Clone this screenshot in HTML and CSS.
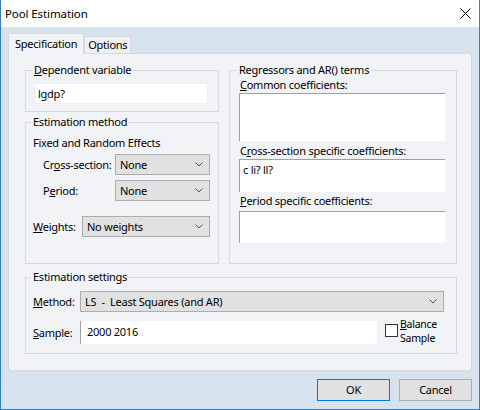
FILE: index.html
```html
<!DOCTYPE html>
<html>
<head>
<meta charset="utf-8">
<link rel="stylesheet" href="styles.css">
</head>
<body>
<div class="window">
  <div class="titlebar">
    <span class="title">Pool Estimation</span>
    <svg class="close" width="11" height="11" viewBox="0 0 11 11"><path d="M0.5 0.5L10.5 10.5M10.5 0.5L0.5 10.5" stroke="#000" stroke-width="1" fill="none"/></svg>
  </div>
  <div class="client">
    <div class="tabs">
      <div class="tab active">Specification</div>
      <div class="tab">Options</div>
    </div>
    <div class="panel">
      <div class="cols">
        <div class="col-left">
          <fieldset class="group dep">
            <legend><u>D</u>ependent variable</legend>
            <div class="edit dep-edit">lgdp?</div>
          </fieldset>
          <fieldset class="group method">
            <legend>Estimation method</legend>
            <div class="line">Fixed and Random Effects</div>
            <div class="fe-row first">
              <span class="lbl">Cr<u>o</u>ss-section:</span>
              <div class="select"><span>None</span><svg class="chev" width="8" height="5" viewBox="0 0 8 5"><path d="M0.5 0.5L4 4L7.5 0.5" stroke="#555" fill="none"/></svg></div>
            </div>
            <div class="fe-row second">
              <span class="lbl">P<u>e</u>riod:</span>
              <div class="select"><span>None</span><svg class="chev" width="8" height="5" viewBox="0 0 8 5"><path d="M0.5 0.5L4 4L7.5 0.5" stroke="#555" fill="none"/></svg></div>
            </div>
            <div class="w-row">
              <span class="lbl"><u>W</u>eights:</span>
              <div class="select"><span>No weights</span><svg class="chev" width="8" height="5" viewBox="0 0 8 5"><path d="M0.5 0.5L4 4L7.5 0.5" stroke="#555" fill="none"/></svg></div>
            </div>
          </fieldset>
        </div>
        <fieldset class="group regs">
          <legend>Regressors and AR() terms</legend>
          <div class="rlabel l1"><u>C</u>ommon coefficients:</div>
          <div class="area a1"></div>
          <div class="rlabel l2">C<u>r</u>oss-section specific coefficients:</div>
          <div class="area a2">c li? ll?</div>
          <div class="rlabel l3"><u>P</u>eriod specific coefficients:</div>
          <div class="area a3"></div>
        </fieldset>
      </div>
      <fieldset class="group settings">
        <legend>Estimation settings</legend>
        <div class="s-row">
          <span class="slbl"><u>M</u>ethod:</span>
          <div class="select wide"><span>LS&nbsp; -&nbsp; Least Squares (and AR)</span><svg class="chev" width="8" height="5" viewBox="0 0 8 5"><path d="M0.5 0.5L4 4L7.5 0.5" stroke="#555" fill="none"/></svg></div>
        </div>
        <div class="s-row sample">
          <span class="slbl"><u>S</u>ample:</span>
          <div class="edit sample-edit">2000 2016</div>
          <div class="check"></div>
          <div class="check-text"><div><u>B</u>alance</div><div>Sample</div></div>
        </div>
      </fieldset>
    </div>
    <div class="buttons">
      <div class="btn default">OK</div>
      <div class="btn">Cancel</div>
    </div>
  </div>
</div>
</body>
</html>
```
FILE: styles.css
```css
* { box-sizing: border-box; }
html, body { margin: 0; padding: 0; }
body {
  font-family: "Noto Sans", "Open Sans", sans-serif;
  font-size: 11px;
  letter-spacing: -0.25px;
  color: #000;
  background: #fff;
}
u { text-decoration: underline; text-underline-offset: 1px; }

.window {
  width: 480px;
  height: 410px;
  border: 1px solid #2b7fd4;
  border-top: 0;
  display: flex;
  flex-direction: column;
}
.titlebar {
  height: 27px;
  background: #fff;
  display: flex;
  align-items: center;
  justify-content: space-between;
  padding: 0 8px 1px 4px;
  font-size: 11.5px;
  letter-spacing: -0.1px;
}
.close { display: block; }

.client {
  flex: 1;
  background: #d7e2ef;
  padding: 6px 7px 0 7px;
  display: flex;
  flex-direction: column;
}

.tabs {
  display: flex;
  align-items: flex-end;
  height: 20px;
  position: relative;
  z-index: 1;
}
.tab {
  height: 17px;
  padding: 0 3px;
  border: 1px solid #d9d9d9;
  border-bottom: 0;
  background: #eef0f3;
  line-height: 16px;
}
.tab.active {
  height: 21px;
  margin-bottom: -1px;
  padding: 0 6px;
  background: #f1f3f6;
  line-height: 19px;
}

.panel {
  height: 318px;
  border: 1px solid #d9d9d9;
  background: #f1f3f6;
  padding: 9px 14px 0 16px;
}
.cols { display: flex; gap: 10px; }
.col-left { width: 194px; display: flex; flex-direction: column; }

fieldset.group {
  margin: 0;
  border: 1px solid #d5dae0;
  padding: 0 7px;
  min-width: 0;
}
fieldset.group legend {
  padding: 0 2px;
  margin-left: -2px;
  line-height: 14px;
}

.edit {
  background: #fff;
  line-height: 20px;
  padding-left: 3px;
}
fieldset.dep { padding: 6px 9px 7px 8px; }
.dep-edit { width: 174px; height: 21px; border: 1px solid #eceef1; }

fieldset.method { margin-top: 3px; padding: 7px 7px 26px 7px; }
.line { line-height: 14px; }
.fe-row, .w-row, .s-row { display: flex; align-items: center; }
.fe-row { margin-left: 10px; }
.fe-row.first { margin-top: 4px; }
.fe-row.second { margin-top: 5px; }
.fe-row .lbl { width: 72px; }
.fe-row .select { width: 95px; }
.w-row { margin-top: 15px; }
.w-row .lbl { width: 49px; }
.w-row .select { width: 128px; }

.select {
  height: 21px;
  background: #e1e1e1;
  border: 1px solid #adadad;
  display: flex;
  align-items: center;
  justify-content: space-between;
  padding: 0 6px 0 4px;
}
.chev { display: block; }

fieldset.regs { flex: 1; padding: 1px 11px 0 9px; }
.rlabel { line-height: 14px; padding-left: 1px; }
.l2 { margin-top: 3px; }
.l3 { margin-top: 2px; }
.area {
  width: 206px;
  background: #fff;
  border-top: 1px solid #a0a0a0;
  border-left: 1px solid #a0a0a0;
  padding: 3px 0 0 3px;
  line-height: 14px;
}
.a1 { height: 48px; margin-top: 1px; }
.a2 { height: 33px; margin-top: 1px; }
.a3 { height: 32px; margin-top: 3px; }

fieldset.settings { margin-top: 6px; padding: 7px 11px 8px 7px; }
.slbl { width: 47px; }
.select.wide { width: 364px; }
.s-row.sample { margin-top: 8px; }
.sample-edit {
  width: 297px;
  height: 23px;
  line-height: 22px;
  border-left: 1px solid #a0a0a0;
  padding-left: 6px;
}
.check {
  width: 13px;
  height: 13px;
  border: 1px solid #333;
  background: #fff;
  margin-left: 8px;
  align-self: flex-start;
  margin-top: 4px;
}
.check-text {
  margin-left: 2px;
  font-size: 10.5px;
  line-height: 14px;
  align-self: flex-start;
  margin-top: -3px;
}

.buttons {
  display: flex;
  justify-content: flex-end;
  gap: 9px;
  margin-top: 8px;
}
.btn {
  width: 73px;
  height: 22px;
  background: #e1e1e1;
  border: 1px solid #adadad;
  text-align: center;
  line-height: 20px;
}
.btn.default { border-color: #0078d7; }
```
